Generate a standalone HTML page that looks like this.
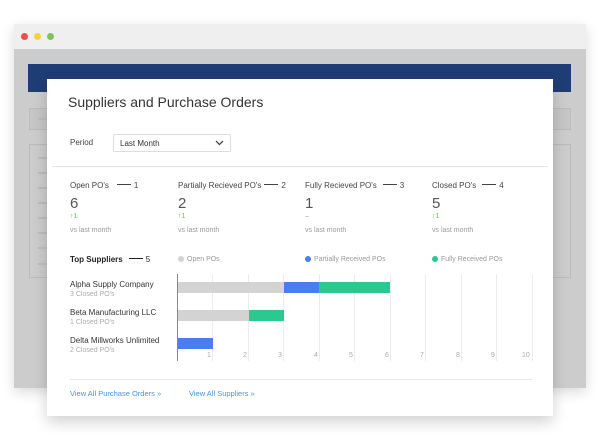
<!DOCTYPE html>
<html><head><style>
*{margin:0;padding:0;box-sizing:border-box}
body{width:600px;height:446px;background:#fff;font-family:"Liberation Sans",sans-serif;position:relative;overflow:hidden}
.a{position:absolute}
.lbl{font-size:8px;color:#444}
.big{font-size:15px;color:#555}
.up{font-size:7px;color:#6cc24a}
.vs{font-size:7px;color:#999}
.leg{font-size:7px;color:#999}
.dot{display:inline-block;width:6px;height:6px;border-radius:50%;margin-right:3px;vertical-align:-1px}
.g{position:absolute;top:274px;height:87px;width:1px;background:#ececec}
.t{position:absolute;top:352px;font-size:7px;color:#aaa}
.line{display:inline-block;width:14px;height:1px;background:#444;vertical-align:3px;margin:0 3px 0 8px}
.gl{position:absolute;left:38px;width:9px;height:2px;background:#bdbdbd}
</style></head><body>
<div class="a" style="left:14px;top:24px;width:572px;height:364px;background:#cccccc;box-shadow:0 4px 12px rgba(0,0,0,.15)"></div>
<div class="a" style="left:14px;top:24px;width:572px;height:25px;background:#efefef"></div>
<div class="a" style="left:21px;top:33px;width:7px;height:7px;border-radius:50%;background:#ee4c4c"></div>
<div class="a" style="left:34px;top:33px;width:7px;height:7px;border-radius:50%;background:#f4d43a"></div>
<div class="a" style="left:47px;top:33px;width:7px;height:7px;border-radius:50%;background:#7cc35c"></div>
<div class="a" style="left:28px;top:64px;width:543px;height:28px;background:#1f3d75"></div>
<div class="a" style="left:29px;top:108px;width:542px;height:22px;border:1px solid #bbb;background:#c6c6c6"></div>
<div class="a" style="left:29px;top:144px;width:542px;height:134px;border:1px solid #bbb"></div>
<div class="gl" style="top:157px"></div><div class="gl" style="top:172px"></div><div class="gl" style="top:187px"></div><div class="gl" style="top:202px"></div><div class="gl" style="top:217px"></div><div class="gl" style="top:232px"></div><div class="gl" style="top:247px"></div><div class="gl" style="top:263px"></div>
<div class="gl" style="top:118px"></div>

<div class="a" style="left:47px;top:79px;width:506px;height:337px;background:#fff;box-shadow:0 6px 14px rgba(0,0,0,.18)"></div>
<div class="a" style="left:68px;top:94px;font-size:14px;color:#333">Suppliers and Purchase Orders</div>
<div class="a lbl" style="left:70px;top:138px">Period</div>
<div class="a" style="left:113px;top:134px;width:118px;height:18px;border:1px solid #ddd;border-radius:2px;font-size:8px;color:#333;padding:4px 0 0 6px">Last Month
<svg class="a" style="right:6px;top:5px" width="9" height="6" viewBox="0 0 9 6"><path d="M1 1 L4.5 4.5 L8 1" stroke="#333" stroke-width="1.2" fill="none"/></svg></div>
<div class="a" style="left:52px;top:166px;width:496px;height:1px;background:#e2e2e2"></div>

<div class="a lbl" style="left:70px;top:181px">Open PO's<span class="line"></span>1</div>
<div class="a big" style="left:70px;top:195px">6</div>
<div class="a up" style="left:70px;top:213px">↑1</div>
<div class="a vs" style="left:70px;top:227px">vs last month</div>

<div class="a lbl" style="left:178px;top:181px">Partially Recieved PO's<span class="line" style="margin-left:3px"></span>2</div>
<div class="a big" style="left:178px;top:195px">2</div>
<div class="a up" style="left:178px;top:213px">↑1</div>
<div class="a vs" style="left:178px;top:227px">vs last month</div>

<div class="a lbl" style="left:305px;top:181px">Fully Recieved PO's<span class="line" style="margin-left:6px"></span>3</div>
<div class="a big" style="left:305px;top:195px">1</div>
<div class="a vs" style="left:305px;top:213px">–</div>
<div class="a vs" style="left:305px;top:227px">vs last month</div>

<div class="a lbl" style="left:432px;top:181px">Closed PO's<span class="line" style="margin-left:6px"></span>4</div>
<div class="a big" style="left:432px;top:195px">5</div>
<div class="a up" style="left:432px;top:213px">↑1</div>
<div class="a vs" style="left:432px;top:227px">vs last month</div>

<div class="a" style="left:70px;top:255px;font-size:8px;color:#222;font-weight:bold">Top Suppliers<span class="line" style="margin-left:6px;background:#222"></span><span style="font-weight:normal">5</span></div>
<div class="a leg" style="left:178px;top:256px"><span class="dot" style="background:#d3d3d3"></span>Open POs</div>
<div class="a leg" style="left:305px;top:256px"><span class="dot" style="background:#4a7cf2"></span>Partially Received POs</div>
<div class="a leg" style="left:432px;top:256px"><span class="dot" style="background:#2bc98f"></span>Fully Received POs</div>

<div class="g" style="left:212px"></div><div class="g" style="left:248px"></div><div class="g" style="left:283px"></div><div class="g" style="left:319px"></div><div class="g" style="left:354px"></div><div class="g" style="left:390px"></div><div class="g" style="left:425px"></div><div class="g" style="left:461px"></div><div class="g" style="left:496px"></div><div class="g" style="left:532px"></div>
<div class="a" style="left:177px;top:274px;width:1px;height:87px;background:#888"></div>
<div class="a" style="left:178px;top:282px;width:106px;height:11px;background:#d3d3d3"></div>
<div class="a" style="left:284px;top:282px;width:35px;height:11px;background:#4a7cf2"></div>
<div class="a" style="left:319px;top:282px;width:71px;height:11px;background:#2bc98f"></div>
<div class="a" style="left:178px;top:310px;width:71px;height:11px;background:#d3d3d3"></div>
<div class="a" style="left:249px;top:310px;width:35px;height:11px;background:#2bc98f"></div>
<div class="a" style="left:178px;top:338px;width:35px;height:11px;background:#4a7cf2"></div>
<div class="t" style="left:207px">1</div><div class="t" style="left:243px">2</div><div class="t" style="left:278px">3</div><div class="t" style="left:314px">4</div><div class="t" style="left:349px">5</div><div class="t" style="left:385px">6</div><div class="t" style="left:420px">7</div><div class="t" style="left:456px">8</div><div class="t" style="left:491px">9</div><div class="t" style="left:522px">10</div>

<div class="a lbl" style="left:70px;top:280px;color:#333">Alpha Supply Company</div>
<div class="a vs" style="left:70px;top:291px;color:#aaa">3 Closed PO's</div>
<div class="a lbl" style="left:70px;top:308px;color:#333">Beta Manufacturing LLC</div>
<div class="a vs" style="left:70px;top:319px;color:#aaa">1 Closed PO's</div>
<div class="a lbl" style="left:70px;top:336px;color:#333">Delta Millworks Unlimited</div>
<div class="a vs" style="left:70px;top:347px;color:#aaa">2 Closed PO's</div>

<div class="a" style="left:70px;top:379px;width:462px;height:1px;background:#e6e6e6"></div>
<div class="a" style="left:70px;top:389px;font-size:7.5px;color:#4a90e2">View All Purchase Orders »</div>
<div class="a" style="left:189px;top:389px;font-size:7.5px;color:#4a90e2">View All Suppliers »</div>
</body></html>
